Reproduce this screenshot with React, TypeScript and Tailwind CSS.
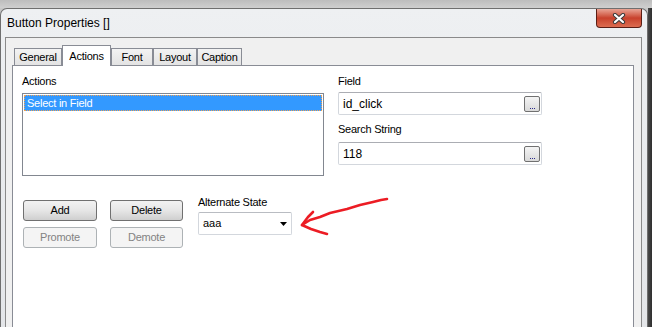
import React from "react";

const sans = "font-['Liberation_Sans',Arial,sans-serif]";

const tabs = [
  { label: "General", w: "w-[48px]" },
  { label: "Actions", w: "w-[49px]", active: true },
  { label: "Font", w: "w-[42px]" },
  { label: "Layout", w: "w-[44px]" },
  { label: "Caption", w: "w-[45px]" },
];

function Label({ children, className = "" }: { children: React.ReactNode; className?: string }) {
  return (
    <div className={`h-[13px] text-[11px] leading-[13px] tracking-[-0.25px] text-black ${className}`}>
      {children}
    </div>
  );
}

// textbox with the little "..." browse button
function BrowseInput({ value, className = "" }: { value: string; className?: string }) {
  return (
    <div
      className={`flex h-[23px] w-[204px] items-center rounded-[2px] border border-[#d3d7dd] border-t-[#abadb3] bg-white pl-[4px] pr-[1px] ${className}`}
    >
      <span className="flex-1 text-[12px] leading-none text-black">{value}</span>
      <span className="flex h-[16px] w-[16px] items-end justify-center rounded-[2px] border border-[#707070] bg-linear-to-b from-[#f4f4f4] to-[#d9d9d9] pb-[2px]">
        <span className="flex gap-px">
          <span className="h-px w-px bg-[#2a2a8a]" />
          <span className="h-px w-px bg-[#2a2a8a]" />
          <span className="h-px w-px bg-[#2a2a8a]" />
        </span>
      </span>
    </div>
  );
}

function Btn({ children, disabled, w }: { children: React.ReactNode; disabled?: boolean; w: string }) {
  return (
    <div
      className={`flex h-[21px] ${w} items-center justify-center rounded-[3px] border text-[11px] tracking-[-0.25px] ${
        disabled
          ? "border-[#adb2b5] bg-[#f4f4f4] text-[#838383]"
          : "border-[#707070] bg-linear-to-b from-[#f2f2f2] via-[#e6e6e6] to-[#cfcfcf] text-black"
      }`}
    >
      {children}
    </div>
  );
}

export default function App() {
  return (
    <div className={`relative flex h-[327px] w-[652px] flex-col overflow-hidden bg-[#c7c7c7] ${sans}`}>
      {/* backdrop above the window */}
      <div className="h-[8px] bg-linear-to-b from-[#bdbdbd] to-[#cfcfcf]" />

      <div className="flex flex-1">
        {/* window */}
        <div className="flex w-[648px] flex-col rounded-t-[7px] border-x border-t border-[#6f6f6f] bg-linear-to-b from-[#eef0f2] to-[#e4e6e9]">
          {/* title bar */}
          <div className="flex h-[28px] items-start">
            <div className="flex h-[28px] flex-1 items-center pl-[6px] text-[12px] text-black">
              Button Properties []
            </div>
            <div className="mr-[5px] flex h-[19px] w-[46px] items-center justify-center rounded-b-[4px] border border-t-0 border-[#5b1e15] bg-linear-to-b from-[#e8a495] via-[#c8412c] to-[#dc6c50]">
              <svg width="14" height="11" viewBox="0 0 14 11">
                <path d="M3 2 L11 9 M11 2 L3 9" stroke="#3b3b3b" strokeWidth="4.2" strokeLinecap="round" />
                <path d="M3 2 L11 9 M11 2 L3 9" stroke="#ffffff" strokeWidth="2.2" strokeLinecap="round" />
              </svg>
            </div>
          </div>

          {/* frame + client area */}
          <div className="flex flex-1 flex-col pl-[4px] pr-[5px]">
            <div className="flex flex-1 flex-col border-x border-t border-[#8a8a8a] bg-[#f0f0f0] pl-[6px] pr-[7px] pt-[7px]">
              {/* tab strip */}
              <div className="flex h-[20px] items-end pl-[2px] text-[11px] tracking-[-0.25px] text-black">
                {tabs.map((t) =>
                  t.active ? (
                    <div
                      key={t.label}
                      className={`relative z-10 -mb-px flex h-[21px] ${t.w} justify-center border-x border-t border-[#898c95] bg-white pt-[2px]`}
                    >
                      {t.label}
                    </div>
                  ) : (
                    <div
                      key={t.label}
                      className={`flex h-[17px] ${t.w} items-center justify-center border-x border-t border-[#898c95] bg-linear-to-b from-[#f3f3f3] to-[#e3e3e3]`}
                    >
                      {t.label}
                    </div>
                  )
                )}
              </div>

              {/* tab page */}
              <div className="flex-1 border-x border-t border-[#898c95] bg-white pl-[9px] pt-[9px]">
                <div className="flex gap-[14px]">
                  <div className="flex w-[302px] flex-col">
                    <Label>Actions</Label>
                    <div className="mt-[5px] h-[83px] border border-[#828790] p-px">
                      <div className="h-[16px] border border-dotted border-[#f0a254] bg-[#3399ff] pl-[2px] text-[11px] leading-[14px] tracking-[-0.25px] text-white">
                        Select in Field
                      </div>
                    </div>
                  </div>
                  <div className="flex w-[204px] flex-col">
                    <Label>Field</Label>
                    <BrowseInput value="id_click" className="mt-[4px]" />
                    <Label className="mt-[8px]">Search String</Label>
                    <BrowseInput value="118" className="mt-[6px]" />
                  </div>
                </div>

                <div className="mt-[20px] flex">
                  <div className="ml-px mt-[4px] grid grid-cols-[74px_73px] gap-x-[13px] gap-y-[6px]">
                    <Btn w="w-[74px]">Add</Btn>
                    <Btn w="w-[73px]">Delete</Btn>
                    <Btn w="w-[74px]" disabled>
                      Promote
                    </Btn>
                    <Btn w="w-[73px]" disabled>
                      Demote
                    </Btn>
                  </div>
                  <div className="ml-[15px] flex flex-col">
                    <Label>Alternate State</Label>
                    <div className="mt-[3px] flex h-[23px] w-[94px] items-center rounded-[2px] border border-[#d3d7dd] border-t-[#b9bcc2] bg-white pl-[4px] pr-[4px]">
                      <span className="flex-1 text-[11px] text-black">aaa</span>
                      <svg width="7" height="4" viewBox="0 0 7 4">
                        <path d="M0 0 H7 L3.5 4 Z" fill="#000" />
                      </svg>
                    </div>
                  </div>
                </div>
              </div>
            </div>
          </div>
        </div>

        {/* shadow strip right of the window */}
        <div className="flex-1 bg-linear-to-r from-[#4a4a4a] to-[#2e2e2e]" />
      </div>

      {/* hand-drawn annotation arrow */}
      <svg className="pointer-events-none absolute left-0 top-0" width="652" height="327">
        <path
          d="M387 199 L381 200 L373 202 L360 205 L347 209 L330 213 L320 217 L310 220 L302 225"
          fill="none"
          stroke="#ec1c24"
          strokeWidth="2.6"
          strokeLinecap="round"
          strokeLinejoin="round"
        />
        <path
          d="M313 212 L308 217 L302 225 L311 229 L320 232 L327 234"
          fill="none"
          stroke="#ec1c24"
          strokeWidth="2.6"
          strokeLinecap="round"
          strokeLinejoin="round"
        />
      </svg>
    </div>
  );
}
